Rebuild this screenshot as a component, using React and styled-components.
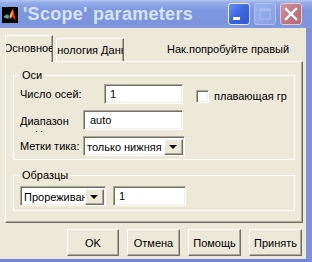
import React from "react";
import styled, { createGlobalStyle, css } from "styled-components";

const Global = createGlobalStyle`
  html, body { margin: 0; padding: 0; background: #ECE9D8; }
  body { font-family: "Liberation Sans", Arial, sans-serif; font-size: 11px; color: #000; }
  * { box-sizing: border-box; }
`;

const Window = styled.div`
  width: 312px;
  height: 262px;
  display: flex;
  flex-direction: column;
  overflow: hidden;
  background: #7D91DE;
`;

const TitleBar = styled.div`
  flex: none;
  height: 28px;
  display: flex;
  align-items: center;
  padding: 0 10px 0 2px;
  background: linear-gradient(
    to bottom,
    #B3C6F2 0%,
    #94ACEA 10%,
    #7F98E1 35%,
    #7B94DE 80%,
    #8299DF 100%
  );
`;

const Title = styled.div`
  margin-left: 5px;
  font-family: "Liberation Sans", Arial, sans-serif;
  font-weight: bold;
  font-size: 18px;
  color: #D8E3F8;
  white-space: nowrap;
  letter-spacing: 0.3px;
`;

const Controls = styled.div`
  margin-left: auto;
  display: flex;
  gap: 4px;
  align-items: center;
`;

const kinds = {
  min: css`
    background: linear-gradient(135deg, #6A92F2 0%, #3E68E0 45%, #2F58D6 100%);
    border-color: #E4ECFC;
  `,
  max: css`
    background: linear-gradient(135deg, #9AB2EE 0%, #86A0E6 100%);
    border-color: #AFC2F0;
  `,
  close: css`
    background: linear-gradient(135deg, #D7949E 0%, #C07884 50%, #B56C78 100%);
    border-color: #E6C8D0;
  `,
};

const TitleButton = styled.div`
  width: 22px;
  height: 22px;
  border: 1px solid;
  border-radius: 3px;
  display: flex;
  align-items: center;
  justify-content: center;
  ${(p) => kinds[p.$kind]}
`;

const Frame = styled.div`
  flex: 1;
  display: flex;
  border-right: 6px solid #7D91DE;
  border-bottom: 3px solid #7185DA;
  box-shadow: inset -1px 0 0 #A9B8EC;
`;

const Client = styled.div`
  flex: 1;
  display: flex;
  flex-direction: column;
  background: #ECE9D8;
`;

const TabStrip = styled.div`
  height: 33px;
  display: flex;
  align-items: flex-end;
  padding-left: 5px;
  gap: 3px;
`;

const Tab = styled.div`
  position: relative;
  z-index: 1;
  width: ${(p) => p.$w}px;
  height: ${(p) => (p.$active ? 27 : 23)}px;
  margin-bottom: ${(p) => (p.$active ? -1 : 0)}px;
  background: #ECE9D8;
  border-top: 1px solid #FFFFFF;
  border-left: 1px solid #FFFFFF;
  border-right: 1px solid #716F64;
  box-shadow: inset -1px 0 0 #ACA899;
  display: flex;
  justify-content: center;
  align-items: center;
  padding-bottom: ${(p) => (p.$active ? 2 : 0)}px;
  overflow: hidden;
  white-space: nowrap;
  font-size: 11px;
`;

const TabText = styled.span`
  flex: none;
`;

const StripNote = styled.div`
  align-self: center;
  margin-left: 40px;
  margin-top: 8px;
  white-space: nowrap;
  font-size: 11px;
`;

const Panel = styled.div`
  height: 162px;
  margin: 0 3px 0 5px;
  border-top: 1px solid #FFFFFF;
  border-left: 1px solid #FFFFFF;
  border-right: 1px solid #716F64;
  border-bottom: 1px solid #716F64;
  box-shadow: inset -1px -1px 0 #ACA899;
  display: flex;
  flex-direction: column;
`;

const Group = styled.fieldset`
  margin: ${(p) => p.$top}px 7px 0 7px;
  padding: ${(p) => p.$pt}px 6px ${(p) => p.$pb}px 6px;
  border: 1px solid #FFFFFF;
  min-inline-size: 0;
`;

const Legend = styled.legend`
  padding: 0 2px;
  line-height: 13px;
  font-size: 11px;
`;

const Rows = styled.div`
  display: flex;
  flex-direction: column;
  gap: 6px;
`;

const Row = styled.div`
  height: 20px;
  display: flex;
  align-items: center;
  gap: ${(p) => p.$gap || 0}px;
`;

const Label = styled.div`
  flex: none;
  width: ${(p) => p.$w}px;
  white-space: nowrap;
  font-size: 11px;
`;

const WrapLabel = styled.div`
  flex: none;
  align-self: flex-start;
  width: ${(p) => p.$w}px;
  height: 22px;
  padding-top: 4px;
  line-height: 14px;
  overflow: hidden;
  font-size: 11px;
`;

const sunken = css`
  background: #FFFFFF;
  border-top: 1px solid #ACA899;
  border-left: 1px solid #ACA899;
  border-right: 1px solid #FFFFFF;
  border-bottom: 1px solid #FFFFFF;
  box-shadow: inset 1px 1px 0 #716F64, inset -1px -1px 0 #F1EFE2;
`;

const TextBox = styled.input`
  ${sunken}
  flex: none;
  width: ${(p) => p.$w}px;
  height: 20px;
  padding: 0 0 0 ${(p) => p.$pl || 5}px;
  margin: 0;
  font-family: "Liberation Sans", Arial, sans-serif;
  font-size: 11px;
  color: #000;
  outline: none;
`;

const Select = styled.div`
  ${sunken}
  flex: none;
  width: ${(p) => p.$w}px;
  height: 20px;
  display: flex;
  align-items: center;
  padding: 2px 1px 1px 2px;
`;

const SelectValue = styled.div`
  flex: 1;
  min-width: 0;
  overflow: hidden;
  white-space: nowrap;
  font-size: 11px;
  padding-left: 1px;
`;

const DropButton = styled.div`
  flex: none;
  width: 19px;
  height: 16px;
  background: #ECE9D8;
  border-top: 1px solid #FFFFFF;
  border-left: 1px solid #FFFFFF;
  border-right: 1px solid #716F64;
  border-bottom: 1px solid #716F64;
  box-shadow: inset -1px -1px 0 #ACA899;
  display: flex;
  align-items: center;
  justify-content: center;
`;

const Arrow = styled.div`
  width: 0;
  height: 0;
  border-left: 4px solid transparent;
  border-right: 4px solid transparent;
  border-top: 4px solid #000;
  margin-right: 1px;
`;

const Check = styled.label`
  display: flex;
  align-items: center;
  gap: 5px;
  margin-left: 13px;
  margin-top: 4px;
  white-space: nowrap;
  font-size: 11px;
`;

const CheckBox = styled.span`
  ${sunken}
  width: 13px;
  height: 13px;
  flex: none;
`;

const ButtonRow = styled.div`
  display: flex;
  justify-content: flex-end;
  gap: 8px;
  padding-right: 4px;
  margin-top: 6px;
`;

const Button = styled.button`
  width: ${(p) => p.$w}px;
  height: 27px;
  margin: 0;
  padding: 0;
  background: #ECE9D8;
  border-top: 1px solid #FFFFFF;
  border-left: 1px solid #FFFFFF;
  border-right: 1px solid #716F64;
  border-bottom: 1px solid #716F64;
  box-shadow: inset -1px -1px 0 #ACA899;
  font-family: "Liberation Sans", Arial, sans-serif;
  font-size: 11px;
  color: #000;
`;

const MatlabIcon = () => (
  <svg width="16" height="16" viewBox="0 0 16 16" style={{ flex: "none", marginTop: 1 }}>
    <rect x="0" y="0" width="16" height="16" fill="#000" />
    <path d="M1 10 L5 7 L8 9 L6 12 Z" fill="#2E8C8C" />
    <path d="M2 10 L5 8 L6 11 Z" fill="#55C0C8" />
    <path d="M6 12 L9 5 L11 2 L12 6 L14 14 L10 10 Z" fill="#D8261A" />
    <path d="M9 5 L11 2 L11.5 7 L9 10 Z" fill="#F47C20" />
    <path d="M8 9 L9 5 L10 9 L8.5 12 Z" fill="#F8D020" />
  </svg>
);

export default function App() {
  return (
    <>
      <Global />
      <Window>
        <TitleBar>
          <MatlabIcon />
          <Title>'Scope' parameters</Title>
          <Controls>
            <TitleButton $kind="min">
              <svg width="20" height="20" viewBox="0 0 20 20">
                <rect x="4" y="13" width="7" height="3" fill="#FFFFFF" />
              </svg>
            </TitleButton>
            <TitleButton $kind="max">
              <svg width="20" height="20" viewBox="0 0 20 20">
                <rect x="5" y="5" width="10" height="10" fill="none" stroke="#A9BEF0" strokeWidth="1" />
                <rect x="5" y="5" width="10" height="2" fill="#A9BEF0" />
              </svg>
            </TitleButton>
            <TitleButton $kind="close">
              <svg width="20" height="20" viewBox="0 0 20 20">
                <path d="M5 5 L15 15 M15 5 L5 15" stroke="#FFFFFF" strokeWidth="2.4" strokeLinecap="square" />
              </svg>
            </TitleButton>
          </Controls>
        </TitleBar>
        <Frame>
          <Client>
            <TabStrip>
              <Tab $active $w={48}>
                <TabText>Основное</TabText>
              </Tab>
              <Tab $w={68}>
                <TabText>Технология Данных</TabText>
              </Tab>
              <StripNote>Нак.попробуйте правый</StripNote>
            </TabStrip>
            <Panel>
              <Group $top={7} $pt={2} $pb={3}>
                <Legend>Оси</Legend>
                <Rows>
                  <Row>
                    <Label $w={84}>Число осей:</Label>
                    <TextBox $w={79} readOnly defaultValue="1" />
                    <Check>
                      <CheckBox />
                      <span>плавающая гр</span>
                    </Check>
                  </Row>
                  <Row>
                    <WrapLabel $w={63}>Диапазон по Y</WrapLabel>
                    <TextBox $w={100} $pl={6} readOnly defaultValue="auto" />
                  </Row>
                  <Row>
                    <Label $w={63}>Метки тика:</Label>
                    <Select $w={102}>
                      <SelectValue>только нижняя</SelectValue>
                      <DropButton>
                        <Arrow />
                      </DropButton>
                    </Select>
                  </Row>
                </Rows>
              </Group>
              <Group $top={9} $pt={4} $pb={4}>
                <Legend>Образцы</Legend>
                <Row $gap={7}>
                  <Select $w={86}>
                    <SelectValue>Прореживание</SelectValue>
                    <DropButton>
                      <Arrow />
                    </DropButton>
                  </Select>
                  <TextBox $w={73} readOnly defaultValue="1" />
                </Row>
              </Group>
            </Panel>
            <ButtonRow>
              <Button $w={52}>OK</Button>
              <Button $w={53}>Отмена</Button>
              <Button $w={53}>Помощь</Button>
              <Button $w={53}>Принять</Button>
            </ButtonRow>
          </Client>
        </Frame>
      </Window>
    </>
  );
}
